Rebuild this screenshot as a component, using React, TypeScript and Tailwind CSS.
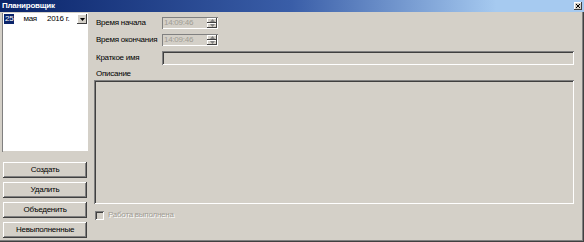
import React from "react";

const font = { fontFamily: '"Liberation Sans", Arial, sans-serif' };

function Spin() {
  return (
    <div className="flex flex-col w-[10px] h-full">
      <div className="flex-1 bg-[#d4d0c8] shadow-[inset_-1px_-1px_0_#404040,inset_1px_1px_0_#fff] flex items-center justify-center">
        <svg width="5" height="3" viewBox="0 0 5 3"><path d="M2.5 0L5 3H0z" fill="#808080" /></svg>
      </div>
      <div className="flex-1 bg-[#d4d0c8] shadow-[inset_-1px_-1px_0_#404040,inset_1px_1px_0_#fff] flex items-center justify-center">
        <svg width="5" height="3" viewBox="0 0 5 3"><path d="M0 0H5L2.5 3z" fill="#808080" /></svg>
      </div>
    </div>
  );
}

function TimeField() {
  return (
    <div className="w-[56px] h-[12px] flex items-stretch bg-[#d4d0c8] shadow-[inset_1px_1px_0_#808080,inset_-1px_-1px_0_#fff] pl-[2px] pr-[1px] py-[1px]">
      <div className="flex-1 text-[8px] leading-[10px] text-[#a09c94]">14:09:46</div>
      <Spin />
    </div>
  );
}

function Btn({ children }: { children: React.ReactNode }) {
  return (
    <div className="h-[16px] w-[84px] ml-[1px] bg-[#d4d0c8] shadow-[inset_-1px_-1px_0_#404040,inset_1px_1px_0_#fff,inset_-2px_-2px_0_#808080] flex items-center justify-center text-[8px] text-black">
      {children}
    </div>
  );
}

export default function App() {
  return (
    <div className="w-[584px] h-[242px] bg-[#d4d0c8] flex flex-col whitespace-nowrap tracking-[-0.25px] shadow-[inset_-1px_-1px_0_#404040,inset_-2px_-2px_0_#808080]" style={font}>
      <div className="h-[12px] flex items-center justify-between bg-[linear-gradient(to_right,#0a246a,#3a5ea8_50%,#a6caf0_85%,#a6caf0)] pl-[2px] pr-[2px]">
        <span className="text-white font-bold text-[8px] leading-[12px]">Планировщик</span>
        <div className="w-[8px] h-[8px] bg-[#d4d0c8] shadow-[inset_-1px_-1px_0_#404040,inset_1px_1px_0_#fff] flex items-center justify-center">
          <svg width="4" height="4" viewBox="0 0 4 4"><path d="M0 0L4 4M4 0L0 4" stroke="#000" strokeWidth="1" /></svg>
        </div>
      </div>
      <div className="flex flex-1">
        <div className="w-[92px] flex flex-col pl-[2px] pt-[1px]">
          <div className="w-[86px] h-[12px] bg-white flex items-center text-[8px] shadow-[inset_1px_0_0_#808080]">
            <span className="ml-[2px] bg-[#0a246a] text-white leading-[10px] px-[1px]">25</span>
            <span className="ml-[9px]">мая</span>
            <span className="ml-[10px]">2016 г.</span>
            <div className="ml-auto mr-[1px] w-[10px] h-[10px] bg-[#d4d0c8] shadow-[inset_-1px_-1px_0_#404040,inset_1px_1px_0_#fff] flex items-center justify-center">
              <svg width="5" height="3" viewBox="0 0 5 3"><path d="M0 0H5L2.5 3z" fill="#000" /></svg>
            </div>
          </div>
          <div className="w-[86px] h-[127px] bg-white shadow-[inset_1px_0_0_#808080,inset_0_-1px_0_#d4d0c8]" />
          <div className="flex flex-col gap-[4px] mt-[10px]">
            <Btn>Создать</Btn>
            <Btn>Удалить</Btn>
            <Btn>Объеденить</Btn>
            <Btn>Невыполненные</Btn>
          </div>
        </div>
        <div className="flex-1 flex flex-col pr-[10px] pl-[2px]">
          <div className="flex items-center mt-[5px] h-[12px]">
            <span className="w-[68px] pl-[2px] text-[8px]">Время начала</span>
            <TimeField />
          </div>
          <div className="flex items-center mt-[5px] h-[12px]">
            <span className="w-[68px] pl-[2px] text-[8px]">Время окончания</span>
            <TimeField />
          </div>
          <div className="flex items-center mt-[5px] h-[14px]">
            <span className="w-[68px] pl-[2px] text-[8px]">Краткое имя</span>
            <div className="flex-1 h-[14px] shadow-[inset_1px_1px_0_#808080,inset_-1px_-1px_0_#fff,inset_2px_2px_0_#404040]" />
          </div>
          <div className="text-[8px] pl-[2px] mt-[4px] leading-[10px]">Описание</div>
          <div className="h-[124px] mt-[1px] shadow-[inset_1px_1px_0_#808080,inset_-1px_-1px_0_#fff,inset_2px_2px_0_#404040]" />
          <div className="flex items-center mt-[5px] ml-[1px]">
            <div className="w-[9px] h-[9px] shadow-[inset_1px_1px_0_#808080,inset_-1px_-1px_0_#fff,inset_2px_2px_0_#404040]" />
            <span className="ml-[4px] text-[8px] text-[#a09c94] [text-shadow:1px_1px_0_#fff]">Работа выполнена</span>
          </div>
        </div>
      </div>
    </div>
  );
}
